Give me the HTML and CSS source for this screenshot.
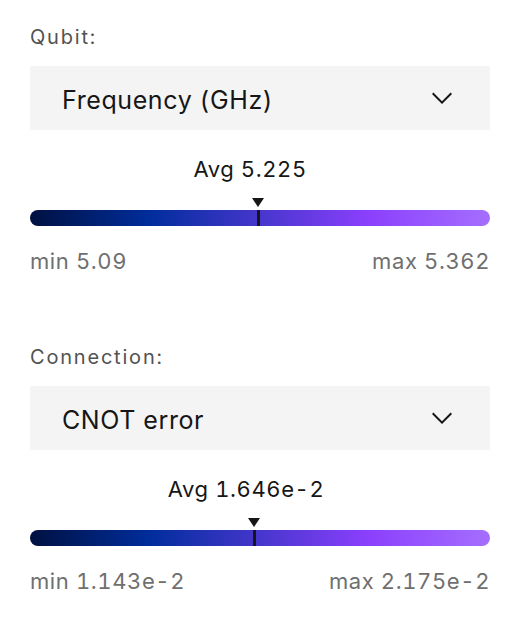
FILE: index.html
```html
<!DOCTYPE html>
<html lang="en">
<head>
<meta charset="utf-8">
<title>Map settings</title>
<link rel="stylesheet" href="styles.css">
</head>
<body>
<div class="panel">
  <section class="group">
    <div class="label">Qubit:</div>
    <div class="select">
      <span class="select-value">Frequency (GHz)</span>
      <svg class="chevron" viewBox="0 0 16 16" width="32" height="32" aria-hidden="true"><path d="M8 11L3 6 3.7 5.3 8 9.6 12.3 5.3 13 6z"/></svg>
    </div>
    <div class="legend" style="--pos: 49.6%">
      <div class="avg-row"><span class="avg">Avg 5.225</span></div>
      <div class="bar">
        <div class="marker"><span class="tri"></span><span class="tick"></span></div>
      </div>
      <div class="range"><span>min 5.09</span><span>max 5.362</span></div>
    </div>
  </section>
  <section class="group">
    <div class="label">Connection:</div>
    <div class="select">
      <span class="select-value">CNOT error</span>
      <svg class="chevron" viewBox="0 0 16 16" width="32" height="32" aria-hidden="true"><path d="M8 11L3 6 3.7 5.3 8 9.6 12.3 5.3 13 6z"/></svg>
    </div>
    <div class="legend" style="--pos: 48.7%">
      <div class="avg-row"><span class="avg">Avg 1.646e-2</span></div>
      <div class="bar">
        <div class="marker"><span class="tri"></span><span class="tick"></span></div>
      </div>
      <div class="range"><span>min 1.143e-2</span><span>max 2.175e-2</span></div>
    </div>
  </section>
</div>
</body>
</html>
```
FILE: styles.css
```css
html, body {
  margin: 0;
  padding: 0;
  background: #ffffff;
}
body {
  font-family: Inter, Roboto, "Noto Sans", sans-serif;
  color: #161616;
  font-variant-numeric: tabular-nums;
}
.panel {
  width: 460px;
  padding: 25px 40px 0 30px;
}
.group + .group {
  margin-top: 72px;
}
.label {
  font-size: 20px;
  line-height: 24px;
  letter-spacing: 1.8px;
  color: #525252;
}
.select {
  margin-top: 17px;
  height: 64px;
  background: #f4f4f4;
  display: flex;
  align-items: center;
  justify-content: space-between;
  padding: 0 32px 0 32px;
  box-sizing: border-box;
}
.select-value {
  font-size: 25px;
  line-height: 24px;
  letter-spacing: 0.6px;
  padding-top: 4px;
  color: #161616;
}
.chevron {
  fill: #161616;
  display: block;
}
.legend {
  margin-top: 27px;
}
.avg-row {
  padding-left: var(--pos);
  white-space: nowrap;
}
.avg {
  display: inline-block;
  font-size: 22px;
  line-height: 24px;
  letter-spacing: 0.6px;
  color: #161616;
  transform: translateX(calc(-50% - 8px));
}
.bar {
  position: relative;
  margin-top: 29px;
  height: 16px;
  border-radius: 8px;
  background: linear-gradient(90deg, #001141 0%, #002d9c 26%, #8a3ffc 73%, #a56eff 100%);
}
.marker {
  position: absolute;
  left: var(--pos);
  top: -12px;
  transform: translateX(-50%);
  display: flex;
  flex-direction: column;
  align-items: center;
  gap: 3px;
}
.tri {
  width: 0;
  height: 0;
  border-left: 6px solid transparent;
  border-right: 6px solid transparent;
  border-top: 9px solid #161616;
}
.tick {
  width: 3px;
  height: 16px;
  background: #161616;
}
.range {
  margin-top: 23px;
  display: flex;
  justify-content: space-between;
  font-size: 22px;
  line-height: 24px;
  letter-spacing: 0.6px;
  color: #6f6f6f;
}
```
